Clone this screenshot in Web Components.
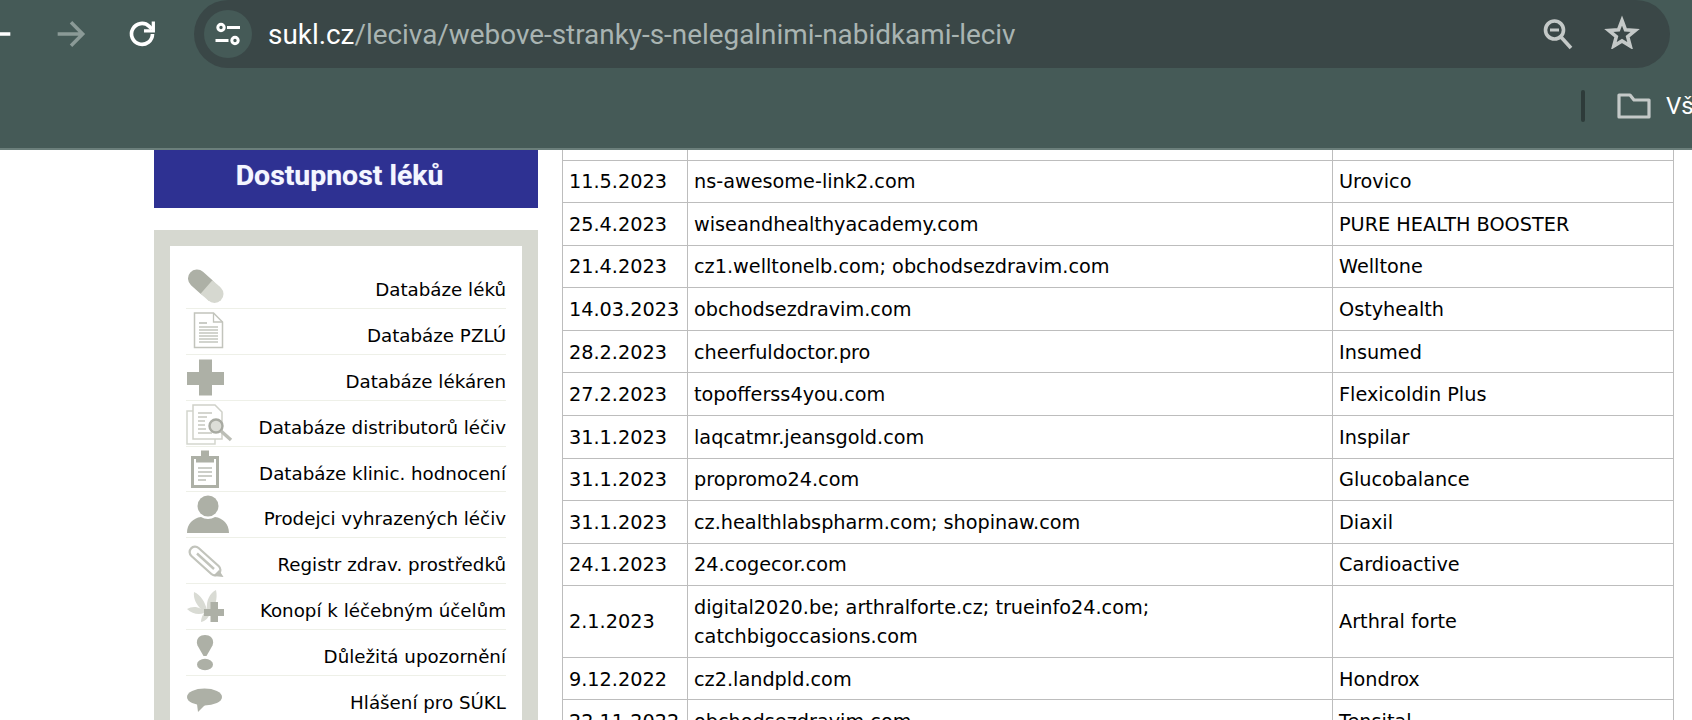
<!DOCTYPE html>
<html lang="cs">
<head>
<meta charset="utf-8">
<title>sukl.cz</title>
<style>
    html, body { margin: 0; height: 720px; overflow: hidden; background: #fff; }
    body { display: flex; flex-direction: column; }
</style>
</head>
<body>
<browser-bar url-host="sukl.cz" url-path="/leciva/webove-stranky-s-nelegalnimi-nabidkami-leciv"></browser-bar>
<page-view>
    <side-column slot="side"></side-column>
    <offers-table slot="main"></offers-table>
</page-view>

<script>
class BrowserBar extends HTMLElement {
    constructor() {
        super();
        this.attachShadow({ mode: "open" });
        this.shadowRoot.innerHTML = `
            <style>
                :host { display: block; height: 150px; box-sizing: border-box; background: #455a57; border-bottom: 2px solid #6b7f7b; font-family: Roboto, sans-serif; overflow: hidden; }
                .top { display: flex; height: 68px; }
                .nav { width: 194px; flex: none; display: flex; align-items: center; }
                .nav svg { flex: none; }
                .omni { width: 1476px; flex: none; background: #3a4747; border-radius: 34px; display: flex; align-items: center; padding: 0 0 0 10px; box-sizing: border-box; }
                .site { width: 48px; height: 48px; border-radius: 50%; background: #455a57; display: flex; align-items: center; justify-content: center; flex: none; }
                .url { margin-left: 16px; font-size: 27.88px; color: #a9b4b2; white-space: nowrap; flex: 1; }
                .url b { font-weight: 400; color: #fff; }
                .actions { display: flex; gap: 30px; align-items: center; padding-right: 30px; }
                .star { margin-top: -4px; }
                .marks { height: 80px; display: flex; align-items: center; justify-content: flex-end; overflow: hidden; }
                .sep { width: 4px; height: 32px; border-radius: 2px; background: #2e3b3a; margin-right: 32px; margin-top: -4px; }
                .folder { flex: none; margin-top: -4px; }
                .label { width: 26px; margin-left: 15px; overflow: hidden; white-space: nowrap; color: #fff; font-size: 24px; margin-top: -4px; flex: none; }
            </style>
            <div class="top">
                <div class="nav">
                    <svg style="margin-left:-23.3px" width="40" height="40" viewBox="0 0 24 24" fill="none" stroke="#fff" stroke-width="2.100"><path d="M20 12H5M12 5l-7 7 7 7"/></svg>
                    <svg style="margin-left:34px" width="40" height="40" viewBox="0 0 24 24" fill="none" stroke="#8b9a97" stroke-width="2.100"><path d="M4 12h15M12 5l7 7-7 7"/></svg>
                    <svg style="margin-left:34px" width="34" height="34" viewBox="0 0 24 24" fill="none" stroke="#fff" stroke-width="2.600"><path d="M19.4 12a7.400 7.400 0 1 1-2.300-5.400L19 8.500"/><path d="M20 3.200v6.600h-6.600" stroke-width="2.300"/></svg>
                </div>
                <div class="omni">
                    <div class="site">
                        <svg width="28" height="28" viewBox="0 0 28 28" fill="none" stroke="#fff" stroke-width="3"><circle cx="7" cy="7.500" r="3.200"/><path d="M13 7.500h13M1.500 20.500h13"/><circle cx="21" cy="20.500" r="3.200"/></svg>
                    </div>
                    <div class="url"><b>${this.getAttribute("url-host")}</b>${this.getAttribute("url-path")}</div>
                    <div class="actions">
                        <svg width="32" height="34" viewBox="0 0 32 34" fill="none" stroke="#c4c9c8" stroke-width="3.600"><circle cx="12.500" cy="13" r="9"/><path d="M8 13h9" stroke-width="3"/><path d="M19 20l10 11"/></svg>
                        <svg class="star" width="36" height="34" viewBox="0 0 36 34" fill="none" stroke="#c4c9c8" stroke-width="3.600" stroke-linejoin="miter"><path d="M18 5.500l3.500 9.300 9.700.7-7.500 6.200 2.500 9.300-8.200-5.100-8.200 5.100 2.500-9.300-7.500-6.200 9.700-.7z"/></svg>
                    </div>
                </div>
            </div>
            <div class="marks">
                <span class="sep"></span>
                <svg class="folder" width="34" height="26" viewBox="0 0 34 26" fill="none" stroke="#c4c9c8" stroke-width="3.200" stroke-linejoin="round"><path d="M2 2h11l4 5h15v17H2z"/></svg>
                <span class="label">Vš</span>
            </div>
        `;
    }
}

class PageView extends HTMLElement {
    constructor() {
        super();
        this.attachShadow({ mode: "open" });
        this.shadowRoot.innerHTML = `
            <style>
                :host { display: flex; flex: 1; min-height: 0; overflow: hidden; background: #fff; color: #000; font-family: "DejaVu Sans", Verdana, sans-serif; padding-left: 154px; }
                .side { width: 384px; flex: none; }
                .main { width: 1112px; margin-left: 24px; flex: none; }
            </style>
            <div class="side"><slot name="side"></slot></div>
            <div class="main"><slot name="main"></slot></div>
        `;
    }
}

// icons use the row's own coordinates, 46 x 46
const MENU_ICONS = {
    pill: `<path d="M11 15.500l9.500 8.500" stroke="#adb0a6" stroke-width="18" stroke-linecap="round" fill="none"/><path d="M20.500 24l8 7" stroke="#d6d8d0" stroke-width="18" fill="none"/><circle cx="28.500" cy="31" r="9" fill="#d6d8d0"/>`,
    doc: `<path d="M8.500 4h19l9 9v25.500h-28z" fill="#fff" stroke="#c2c4bc" stroke-width="1.500"/><path d="M27.500 4v9h9" fill="none" stroke="#c2c4bc" stroke-width="1.300"/><path d="M13 14h8" stroke="#b4b6ae" stroke-width="1.400"/><path d="M13 18h19M13 21h19M13 24h19M13 27h19M13 30h19M13 33h19" stroke="#c4c6be" stroke-width="1.400"/>`,
    cross: `<path d="M13 4.500h13v12.500h12v13H26v10.500H13V30H1V17h12z" fill="#adb0a6"/>`,
    search: `<path d="M1 10h28v33H1z" fill="#fff" stroke="#d4d6ce" stroke-width="1.500"/><path d="M7 4h22l7 7v27H7z" fill="#fff" stroke="#cfd1c9" stroke-width="1.500"/><path d="M12 12h14M12 16h9M12 20h7M12 24h7M12 28h8M12 32h14" stroke="#c6c8c0" stroke-width="1.500"/><circle cx="30" cy="25" r="6.500" fill="#dcddd7" stroke="#a8aaa2" stroke-width="2.400"/><path d="M35 30l10 9" stroke="#bcbeb6" stroke-width="3.400"/>`,
    board: `<path d="M6.500 10.500h25v29h-25z" fill="#fff" stroke="#adb0a6" stroke-width="3"/><path d="M15 3.500h8v6h5v6H10v-6h5z" fill="#adb0a6"/><path d="M12 21h14M12 25h14M12 29h14M12 33h8" stroke="#bcbeb6" stroke-width="1.600"/>`,
    person: `<circle cx="22" cy="14" r="10.500" fill="#adb0a6"/><path d="M1 41c0-9 6-15 14-16 4 2.500 10 2.500 14 0 8 1 14 7 14 16z" fill="#adb0a6"/>`,
    pen: `<path d="M9 14l20 18" stroke="#c2c4bc" stroke-width="13" stroke-linecap="round" fill="none"/><path d="M9 14l20 18" stroke="#fff" stroke-width="8.500" stroke-linecap="round" fill="none"/><path d="M11 15.500l17 15.500" stroke="#c2c4bc" stroke-width="2.400" fill="none"/><path d="M27 38l6-6 4.500 7z" fill="#bcbeb6"/>`,
    hemp: `<path d="M21 26C19 18 15 11 8 8c-1 7 3 13 7 17C10 22 5 23 1 25c5 5 12 6 17 4-2 3-3 6-3 9 5-1 8-5 9-9 5-6 8-14 6-23-6 3-10 10-9 20z" fill="#d9dbd4"/><path d="M24.500 18h7.500v7h6v7h-6v6h-7.500v-6h-6.500v-7h6.500z" fill="#adb0a6"/>`,
    warn: `<path d="M19 5c6.500 0 9.500 5 7.500 10.500l-6 10.500h-3l-6-10.500C9.500 10 12.500 5 19 5z" fill="#adb0a6"/><ellipse cx="19" cy="34.500" rx="8" ry="5.800" fill="#adb0a6"/>`,
    bubble: `<ellipse cx="18.500" cy="21" rx="17.500" ry="8.500" fill="#adb0a6"/><path d="M11 28l1 8 7-7z" fill="#adb0a6"/>`
};

class MenuItem extends HTMLElement {
    constructor() {
        super();
        this.attachShadow({ mode: "open" });
        this.shadowRoot.innerHTML = `
            <style>
                :host { display: flex; height: 45.9px; box-sizing: border-box; border-bottom: 1px solid #eef0e8; }
                :host([last]) { border-bottom: 0; }
                svg { flex: none; overflow: visible; filter: blur(0.4px); }
                .text { flex: 1; text-align: right; font-size: 18.25px; line-height: 22px; padding-top: 16px; white-space: nowrap; }
            </style>
            <svg width="46" height="45" viewBox="0 0 46 45">${MENU_ICONS[this.getAttribute("icon")]}</svg>
            <div class="text"><slot></slot></div>
        `;
    }
}

class SideColumn extends HTMLElement {
    constructor() {
        super();
        this.attachShadow({ mode: "open" });
        this.shadowRoot.innerHTML = `
            <style>
                :host { display: block; }
                .head { height: 58px; background: #2e3192; color: #f4f6ff; font: 700 28.4px Roboto, sans-serif; text-align: center; line-height: 51px; padding-right: 13px; box-sizing: border-box; text-shadow: 0 0 1px rgba(244, 246, 255, 0.5); }
                .box { margin-top: 22px; background: #d6d8d0; padding: 16px 16px 0; }
                .inner { background: #fff; padding: 17px 16px 0; }
            </style>
            <div class="head">Dostupnost léků</div>
            <div class="box"><div class="inner">
                <menu-item icon="pill">Databáze léků</menu-item>
                <menu-item icon="doc">Databáze PZLÚ</menu-item>
                <menu-item icon="cross">Databáze lékáren</menu-item>
                <menu-item icon="search">Databáze distributorů léčiv</menu-item>
                <menu-item icon="board">Databáze klinic. hodnocení</menu-item>
                <menu-item icon="person">Prodejci vyhrazených léčiv</menu-item>
                <menu-item icon="pen">Registr zdrav. prostředků</menu-item>
                <menu-item icon="hemp">Konopí k léčebným účelům</menu-item>
                <menu-item icon="warn">Důležitá upozornění</menu-item>
                <menu-item icon="bubble" last>Hlášení pro SÚKL</menu-item>
            </div></div>
        `;
    }
}

const OFFERS = [
    ["", "", "", 10],
    ["11.5.2023", "ns-awesome-link2.com", "Urovico"],
    ["25.4.2023", "wiseandhealthyacademy.com", "PURE HEALTH BOOSTER"],
    ["21.4.2023", "cz1.welltonelb.com; obchodsezdravim.com", "Welltone"],
    ["14.03.2023", "obchodsezdravim.com", "Ostyhealth"],
    ["28.2.2023", "cheerfuldoctor.pro", "Insumed"],
    ["27.2.2023", "topofferss4you.com", "Flexicoldin Plus"],
    ["31.1.2023", "laqcatmr.jeansgold.com", "Inspilar"],
    ["31.1.2023", "propromo24.com", "Glucobalance"],
    ["31.1.2023", "cz.healthlabspharm.com; shopinaw.com", "Diaxil"],
    ["24.1.2023", "24.cogecor.com", "Cardioactive"],
    ["2.1.2023", "digital2020.be; arthralforte.cz; trueinfo24.com; catchbigoccasions.com", "Arthral forte"],
    ["9.12.2022", "cz2.landpld.com", "Hondrox"],
    ["22.11.2022", "obchodsezdravim.com", "Tensital"]
];

class OffersTable extends HTMLElement {
    constructor() {
        super();
        this.attachShadow({ mode: "open" });
        const rows = OFFERS.map(r => {
            const h = r[3] ? `height:${r[3]}px;padding:0;` : "";
            return `<tr><td style="${h}">${r[0]}</td><td style="${h}">${r[1]}</td><td style="${h}">${r[2]}</td></tr>`;
        }).join("");
        this.shadowRoot.innerHTML = `
            <style>
                :host { display: block; font-size: 19.25px; line-height: 29px; }
                table { border-collapse: collapse; table-layout: fixed; width: 1112px; }
                td { border: 1px solid #bdbdbd; padding: 6.7px 6px 5.9px; box-sizing: border-box; vertical-align: middle; }
                tr:first-child td { border-top: 0; }
            </style>
            <table>
                <colgroup><col style="width:125px"><col style="width:645px"><col style="width:341px"></colgroup>
                ${rows}
            </table>
        `;
    }
}

customElements.define("browser-bar", BrowserBar);
customElements.define("page-view", PageView);
customElements.define("menu-item", MenuItem);
customElements.define("side-column", SideColumn);
customElements.define("offers-table", OffersTable);
</script>
</body>
</html>
